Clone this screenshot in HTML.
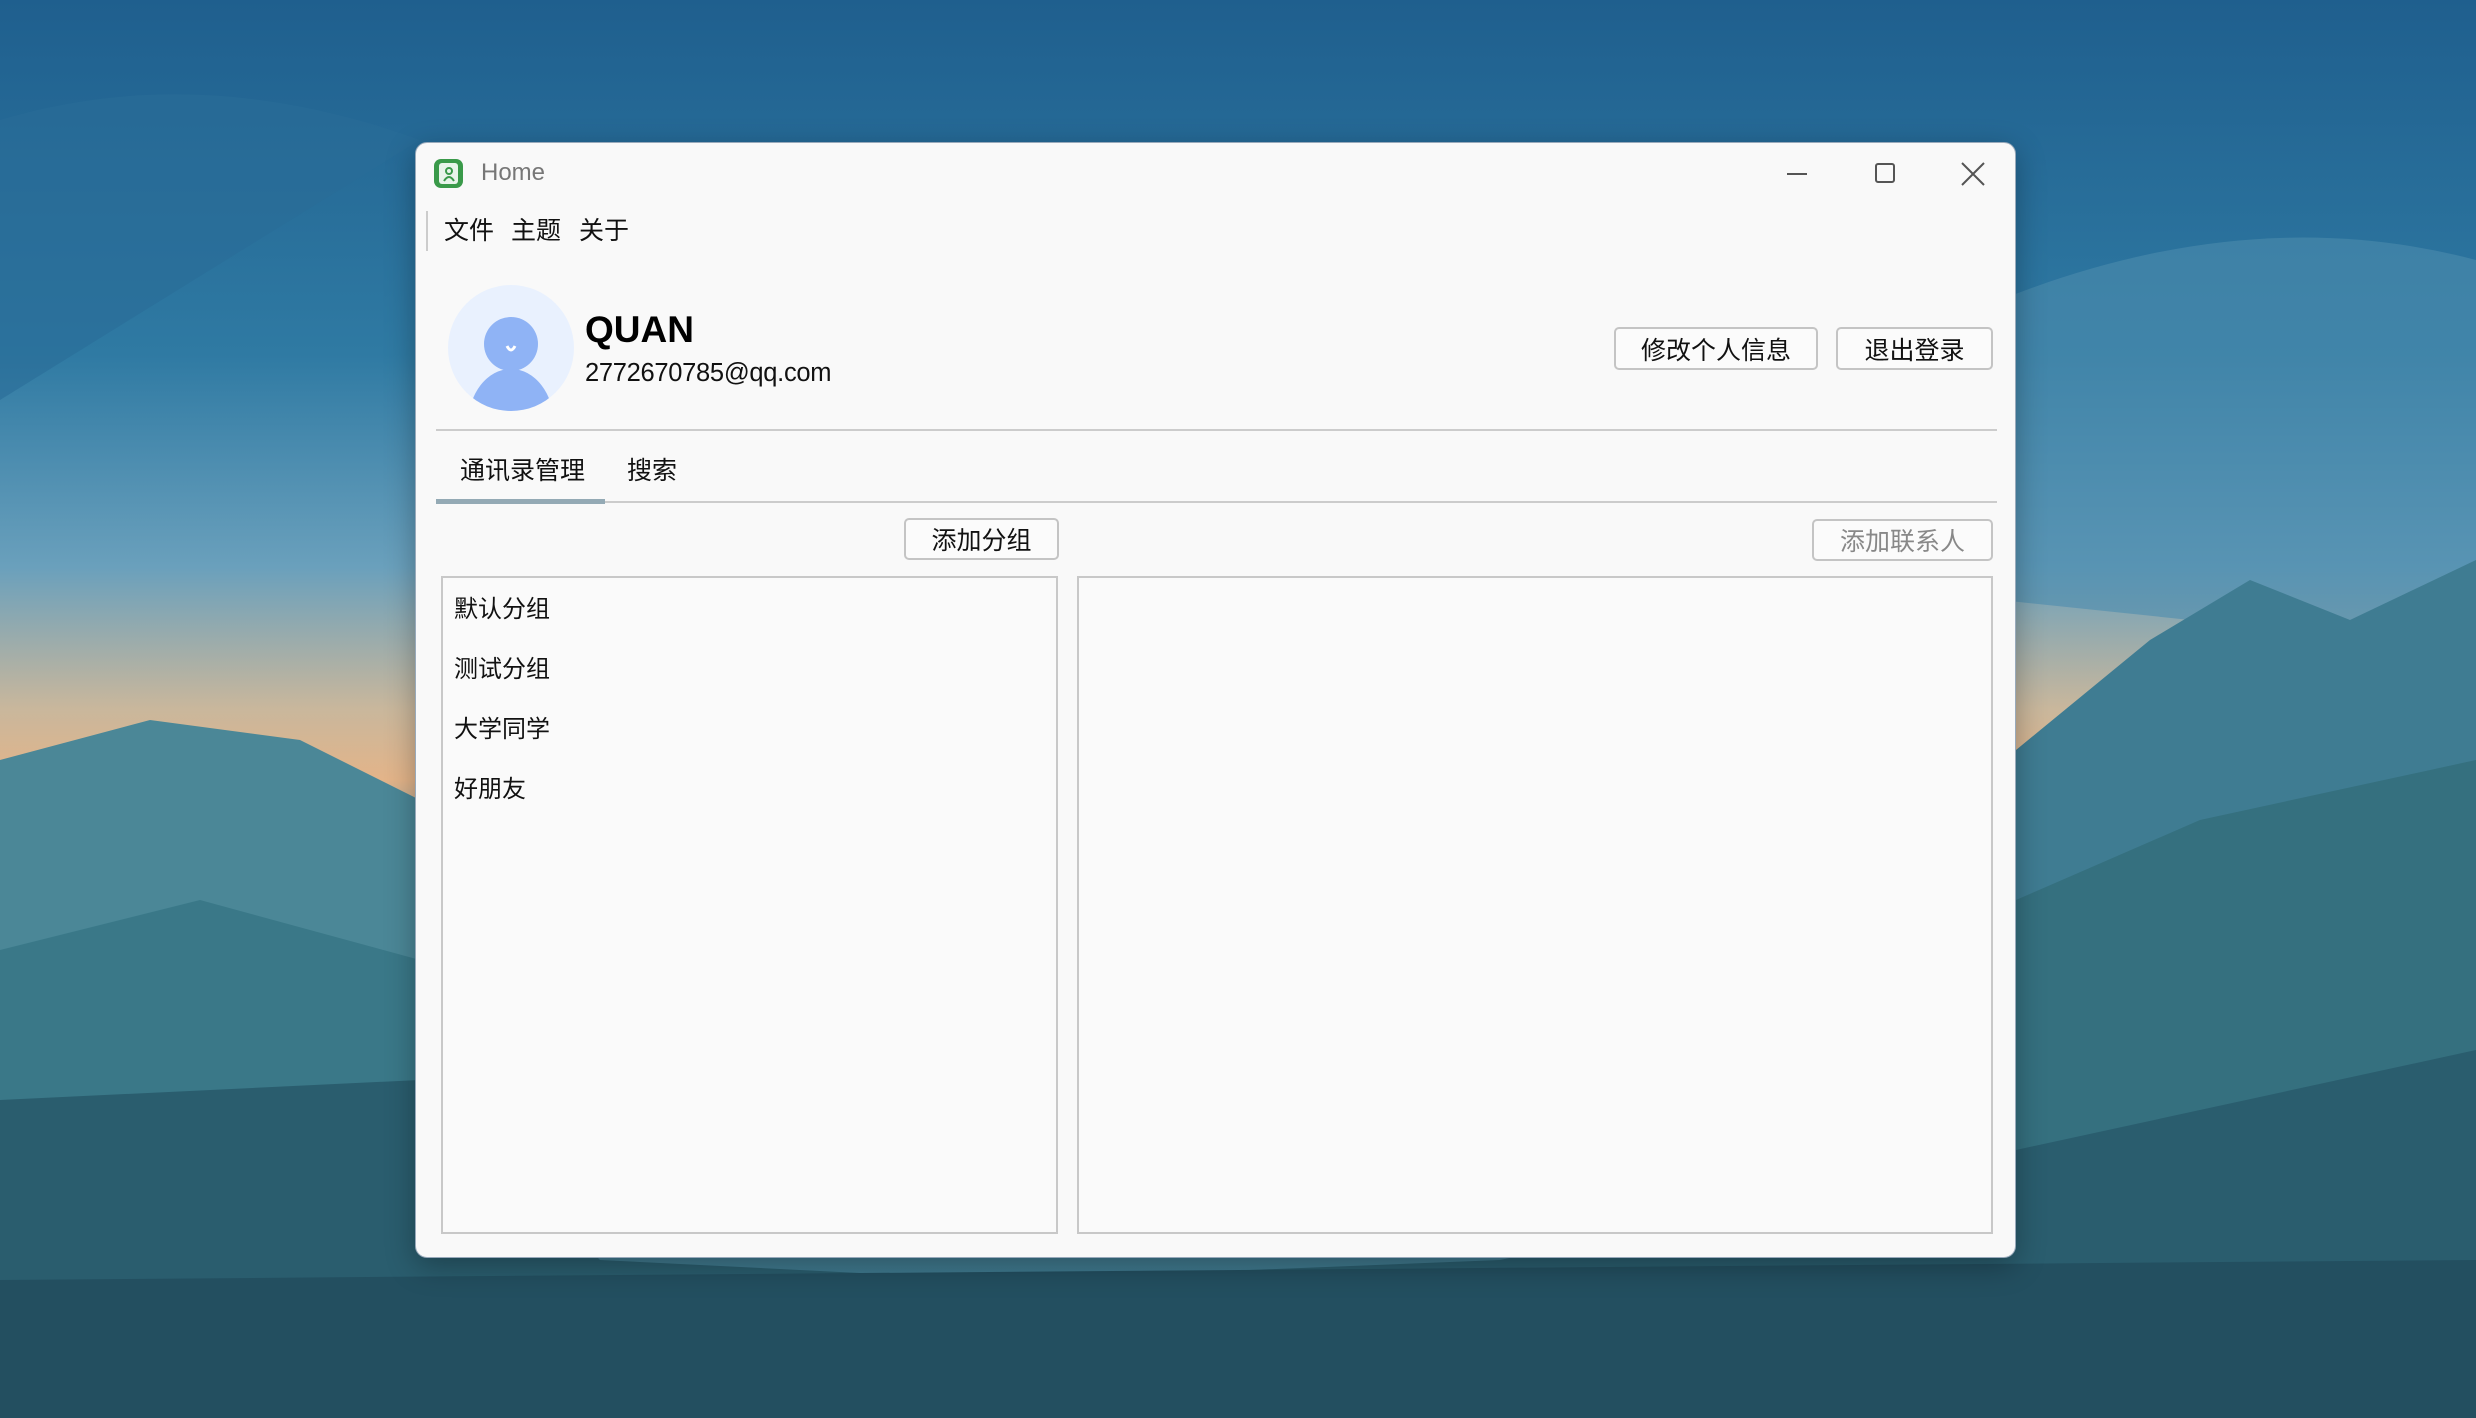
<!DOCTYPE html>
<html><head><meta charset="utf-8"><style>
*{margin:0;padding:0;box-sizing:border-box}
body{width:2476px;height:1418px;overflow:hidden;position:relative;font-family:"Liberation Sans","Noto Sans CJK SC",sans-serif;}
.bg{position:absolute;left:0;top:0}
.win{position:absolute;left:415px;top:142px;width:1601px;height:1116px;background:#f9f9f9;border-radius:12px;border:1px solid #9ab;box-shadow:0 8px 30px rgba(0,0,0,.3)}
.a{position:absolute;white-space:nowrap;line-height:1}
.btn{position:absolute;border:2px solid #c4c4c4;border-radius:5px;background:#fbfbfb;font-size:25px;display:flex;align-items:center;justify-content:center;color:#111}
.cn{font-family:"Noto Sans CJK SC","WenQuanYi Zen Hei",sans-serif}
.panel{position:absolute;border:2px solid #c8c8c8;background:#fafafa}
.li{position:absolute;left:11px;font-size:24px;color:#111}
</style></head><body>
<svg class="bg" width="2476" height="1418" viewBox="0 0 2476 1418">
<defs><linearGradient id="s" x1="0" y1="0" x2="0" y2="1">
<stop offset="0" stop-color="#1f5f8e"/><stop offset=".25" stop-color="#2f7aa3"/><stop offset=".4" stop-color="#6aa0bc"/><stop offset=".5" stop-color="#c9b79c"/><stop offset=".55" stop-color="#e3b489"/><stop offset=".62" stop-color="#6d9cb0"/><stop offset="1" stop-color="#2d6b80"/></linearGradient></defs>
<rect width="2476" height="1418" fill="url(#s)"/>
<path d="M0 120 Q200 60 420 140 L0 400Z" fill="#2a6d98" opacity=".6"/>
<path d="M2000 300 Q2250 200 2476 260 L2476 650 L2000 600Z" fill="#4d8cad" opacity=".6"/>
<path d="M0 760 L150 720 L300 740 L420 800 L420 1418 L0 1418Z" fill="#4b8797"/>
<path d="M2016 750 L2150 640 L2250 580 L2350 620 L2476 560 L2476 1418 L2016 1418Z" fill="#3f7c92"/>
<path d="M0 950 L200 900 L420 960 L420 1418 L0 1418Z" fill="#3a7888"/>
<path d="M2016 900 L2200 820 L2476 760 L2476 1418 L2016 1418Z" fill="#35707f"/>
<path d="M0 1100 L420 1080 L600 1260 L1000 1280 L1500 1260 L2016 1150 L2476 1050 L2476 1418 L0 1418Z" fill="#2a5d6e"/>
<path d="M0 1280 L2476 1260 L2476 1418 L0 1418Z" fill="#234f60"/>
</svg>
<div class="win">
 <svg class="a" style="left:17px;top:15px" width="31" height="31" viewBox="0 0 31 31"><rect x="1" y="1" width="29" height="29" rx="7" fill="#3a9a4a"/><rect x="6" y="5" width="19" height="21" rx="3" fill="#e8f4ea"/><circle cx="16" cy="13" r="3" fill="none" stroke="#3a9a4a" stroke-width="2"/><path d="M11 23 Q16 15 21 23" fill="none" stroke="#3a9a4a" stroke-width="2"/></svg>
 <div class="a" style="left:65px;top:18px;font-size:24px;color:#777">Home</div>
 <div class="a" style="left:1371px;top:30px;width:20px;height:2px;background:#555"></div>
 <div class="a" style="left:1459px;top:20px;width:20px;height:20px;border:2px solid #555;border-radius:3px"></div>
 <svg class="a" style="left:1545px;top:19px" width="24" height="24"><path d="M1 1L23 23M23 1L1 23" stroke="#555" stroke-width="2"/></svg>
 <div class="a" style="left:10px;top:68px;width:2px;height:40px;background:#ccc"></div>
 <div class="a cn" style="left:28px;top:74px;font-size:25px;color:#111">文件</div>
 <div class="a cn" style="left:95px;top:74px;font-size:25px;color:#111">主题</div>
 <div class="a cn" style="left:163px;top:74px;font-size:25px;color:#111">关于</div>
 <svg class="a" style="left:31px;top:141px" width="128" height="128" viewBox="0 0 128 128"><defs><clipPath id="c"><circle cx="64" cy="64" r="63"/></clipPath></defs><circle cx="64" cy="64" r="63" fill="#e9f1fe"/><g clip-path="url(#c)"><circle cx="64" cy="60" r="27" fill="#8fb3f5"/><ellipse cx="64" cy="140" rx="43" ry="55" fill="#8fb3f5"/></g><path d="M60 62 Q64 70 68 62" fill="none" stroke="#fff" stroke-width="3"/></svg>
 <div class="a" style="left:169px;top:168px;font-size:37px;font-weight:bold;color:#000">QUAN</div>
 <div class="a" style="left:169px;top:218px;font-size:25.5px;color:#111;letter-spacing:-0.3px">2772670785@qq.com</div>
 <div class="btn cn" style="left:1198px;top:184px;width:204px;height:43px">修改个人信息</div>
 <div class="btn cn" style="left:1420px;top:184px;width:157px;height:43px">退出登录</div>
 <div class="a" style="left:20px;top:286px;width:1561px;height:2px;background:#ccc"></div>
 <div class="a cn" style="left:44px;top:314px;font-size:25px;color:#111">通讯录管理</div>
 <div class="a cn" style="left:211px;top:314px;font-size:25px;color:#111">搜索</div>
 <div class="a" style="left:20px;top:358px;width:1561px;height:2px;background:#ccc"></div>
 <div class="a" style="left:20px;top:356px;width:169px;height:5px;background:#94aab5"></div>
 <div class="btn cn" style="left:488px;top:375px;width:155px;height:42px">添加分组</div>
 <div class="btn cn" style="left:1396px;top:376px;width:181px;height:42px;color:#888">添加联系人</div>
 <div class="panel" style="left:25px;top:433px;width:617px;height:658px">
  <div class="a li cn" style="top:17px">默认分组</div>
  <div class="a li cn" style="top:77px">测试分组</div>
  <div class="a li cn" style="top:137px">大学同学</div>
  <div class="a li cn" style="top:197px">好朋友</div>
 </div>
 <div class="panel" style="left:661px;top:433px;width:916px;height:658px"></div>
</div>
</body></html>
